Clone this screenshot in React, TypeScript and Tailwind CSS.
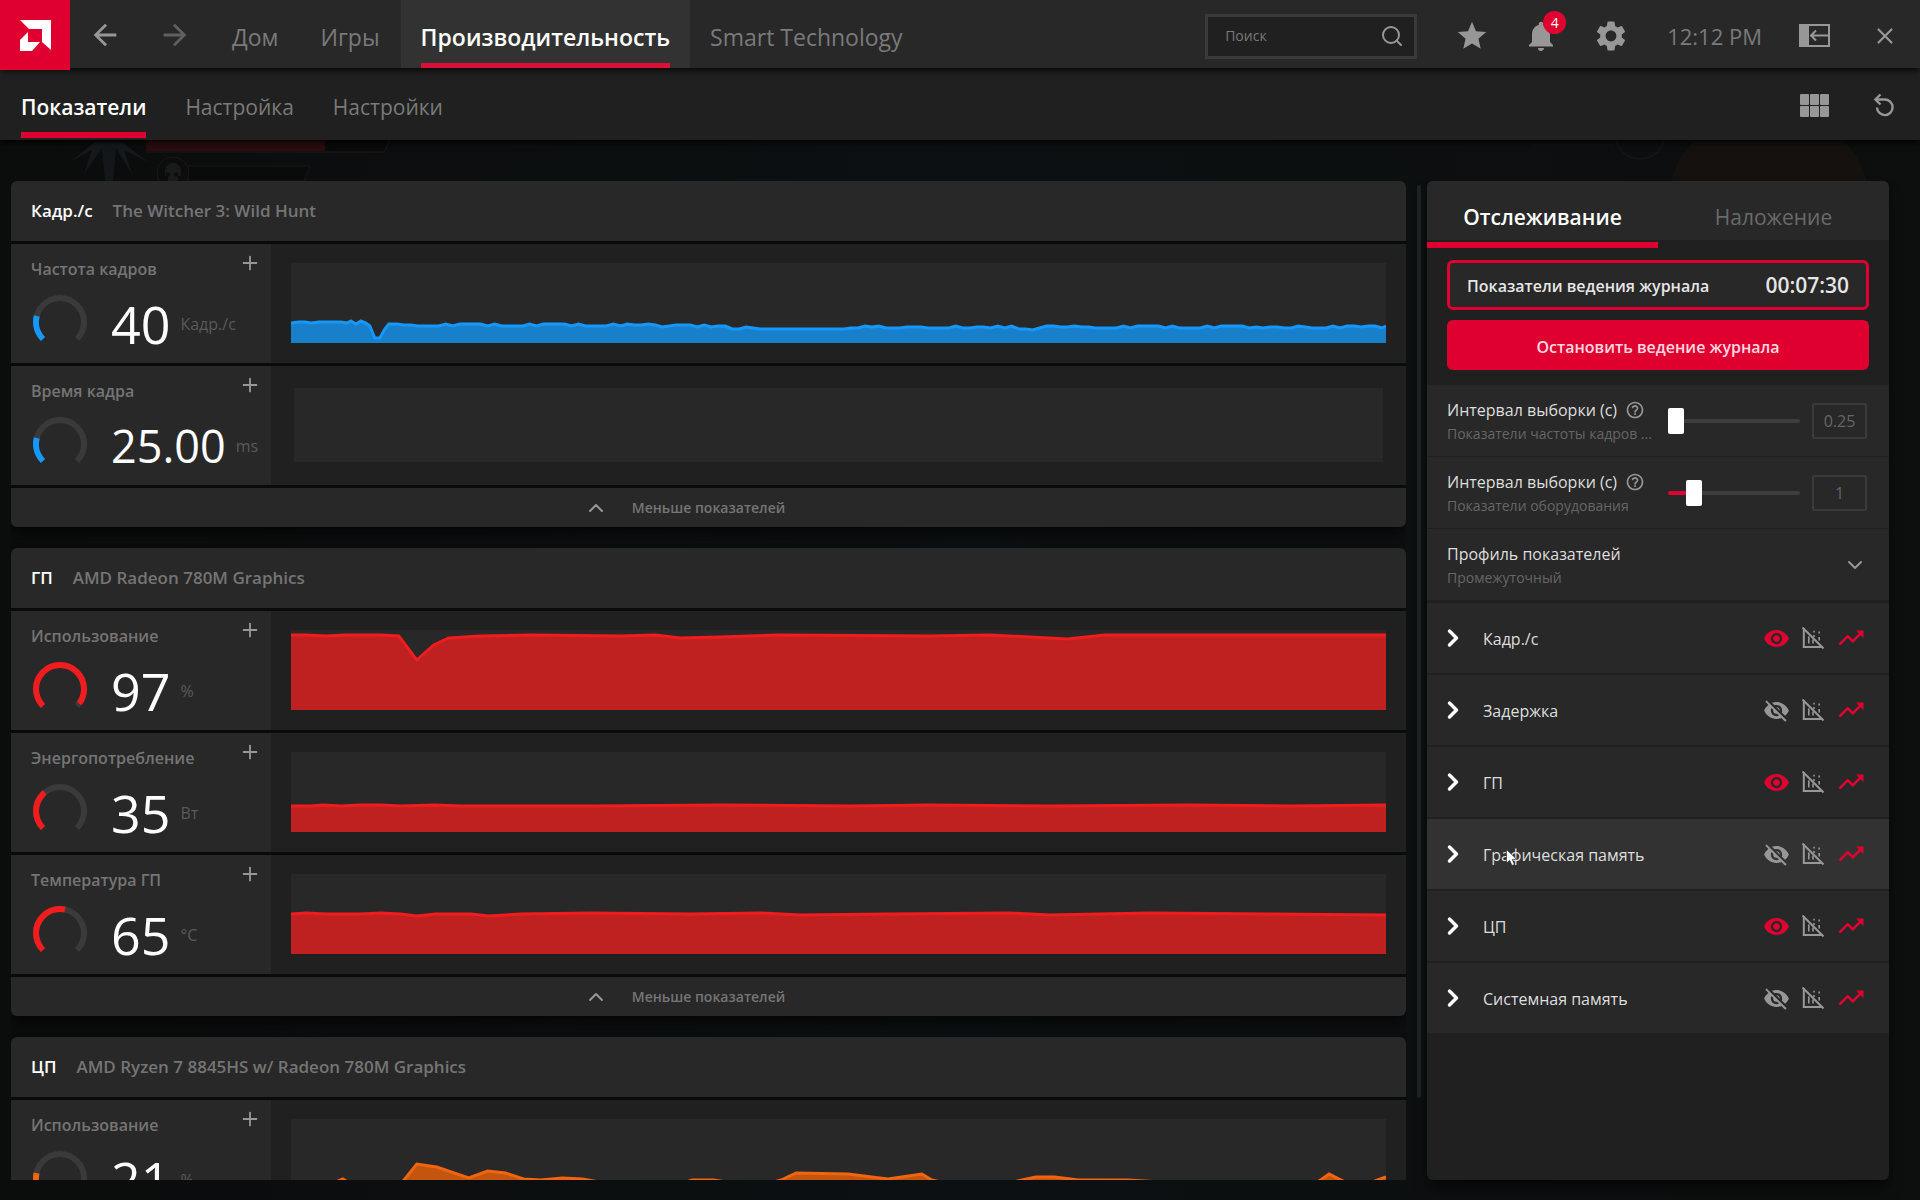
import { ChevronDown, ChevronRight, ChevronUp, Plus, Search, X } from 'lucide-react';
import { useState } from 'react';
import {
    MdArrowBack,
    MdArrowForward,
    MdHelpOutline,
    MdNotifications,
    MdSettings,
    MdStar,
    MdTrendingUp,
    MdVisibility,
    MdVisibilityOff,
} from 'react-icons/md';

type Point = [number, number];

interface Metric {
    label: string;
    value: string;
    unit: string;
    gauge: number;
    points: Point[];
}

interface MetricGroup {
    title: string;
    device: string;
    stroke: string;
    fill: string;
    metrics: Metric[];
}

const CHART_WIDTH = 1097;
const CHART_HEIGHT = 80;

// Frame rate: one dip near the start, then a small steady ripple
const buildFps = (): Point[] => {
    const points: Point[] = [
        [0, 20],
        [8, 21],
        [14, 21],
        [20, 20],
        [28, 21],
        [40, 21],
        [50, 21],
        [56, 20],
        [60, 22],
        [65, 19],
        [70, 22],
        [75, 20],
        [79, 17],
        [84, 5],
        [89, 5],
        [94, 14],
        [98, 19],
    ];
    for (let x = 106; x <= CHART_WIDTH; x += 7) {
        let base = 18;
        let ripple = 1;
        if (x > 370) base = 17;
        if (x > 440) base = 15;
        if (x > 490 && x < 560) {
            base = 14;
            ripple = 0;
        }
        if (x >= 560) base = 16;
        if (x > 725 && x < 745) base = 13;
        points.push([x, base + ripple * Math.round(Math.sin(x * x * 0.31) * 1.2)]);
    }
    points.push([CHART_WIDTH, 17]);
    return points;
};

const groups: MetricGroup[] = [
    {
        title: 'Кадр./с',
        device: 'The Witcher 3: Wild Hunt',
        stroke: '#1697fb',
        fill: '#187fcb',
        metrics: [
            { label: 'Частота кадров', value: '40', unit: 'Кадр./с', gauge: 0.22, points: buildFps() },
            { label: 'Время кадра', value: '25.00', unit: 'ms', gauge: 0.22, points: [] },
        ],
    },
    {
        title: 'ГП',
        device: 'AMD Radeon 780M Graphics',
        stroke: '#f01c1e',
        fill: '#bf2020',
        metrics: [
            {
                label: 'Использование',
                value: '97',
                unit: '%',
                gauge: 0.97,
                points: [
                    [0, 75], [15, 75], [35, 74], [55, 75], [90, 75], [108, 74], [126, 50],
                    [143, 65], [158, 72], [190, 74], [240, 75], [330, 74], [365, 75], [390, 72],
                    [430, 73], [490, 75], [640, 74], [700, 75], [740, 73], [778, 71], [815, 75],
                    [900, 75], [1097, 75],
                ],
            },
            {
                label: 'Энергопотребление',
                value: '35',
                unit: 'Вт',
                gauge: 0.355,
                points: [
                    [0, 26], [20, 26], [32, 27], [50, 26], [70, 27], [90, 27], [110, 26],
                    [144, 27], [170, 26], [300, 26], [430, 27], [560, 26], [640, 27], [760, 26],
                    [900, 27], [1000, 26], [1097, 27],
                ],
            },
            {
                label: 'Температура ГП',
                value: '65',
                unit: '°C',
                gauge: 0.545,
                points: [
                    [0, 40], [15, 41], [35, 40], [70, 40], [90, 41], [110, 40], [126, 38],
                    [145, 40], [180, 40], [198, 38], [230, 40], [300, 41], [400, 40], [470, 41],
                    [510, 39], [600, 40], [720, 41], [760, 39], [860, 41], [980, 40], [1097, 39],
                ],
            },
        ],
    },
    {
        title: 'ЦП',
        device: 'AMD Ryzen 7 8845HS w/ Radeon 780M Graphics',
        stroke: '#f16410',
        fill: '#c3550f',
        metrics: [
            {
                label: 'Использование',
                value: '21',
                unit: '%',
                gauge: 0.21,
                points: [
                    [0, 14], [40, 15], [52, 20], [60, 15], [110, 15], [126, 35], [146, 32],
                    [178, 21], [197, 28], [215, 26], [233, 20], [250, 19], [272, 21], [292, 20],
                    [320, 15], [390, 15], [402, 19], [423, 19], [450, 15], [480, 16], [491, 19],
                    [506, 26], [558, 25], [598, 20], [632, 25], [642, 19], [660, 15], [715, 15],
                    [728, 18], [746, 22], [765, 22], [789, 19], [838, 19], [872, 17], [900, 12],
                    [1015, 12], [1030, 18], [1040, 25], [1054, 18], [1066, 13], [1076, 13],
                    [1086, 18], [1097, 22],
                ],
            },
        ],
    },
];

const trackedItems = [
    { label: 'Кадр./с', visible: true },
    { label: 'Задержка', visible: false },
    { label: 'ГП', visible: true },
    { label: 'Графическая память', visible: false, hovered: true },
    { label: 'ЦП', visible: true },
    { label: 'Системная память', visible: false },
];

function Logo() {
    return (
        <svg viewBox="0 0 31 31" className="size-[31px]" fill="#fff">
            <path d="M0 0H31V30L22 22V9H9Z" />
            <path d="M8 12V22H20L12 31H0V20Z" />
        </svg>
    );
}

function DockIcon() {
    return (
        <svg viewBox="0 0 31 24" className="h-6 w-[31px]" fill="none" stroke="#979797" strokeWidth="2">
            <path d="M1 1H30V22H1Z" />
            <path d="M1 1H9V22H1Z" fill="#979797" />
            <path d="M29 11.5H13M17 6.5L12 11.5L17 16.5" />
        </svg>
    );
}

function GridIcon() {
    return (
        <svg viewBox="0 0 29 23" className="h-[23px] w-[29px]" fill="#979797">
            {[0, 10, 20].map((x) => (
                <g key={x}>
                    <rect x={x} y="0" width="9" height="11" rx="1" />
                    <rect x={x} y="12" width="9" height="11" rx="1" />
                </g>
            ))}
        </svg>
    );
}

function ResetIcon() {
    return (
        <svg viewBox="0 0 22 24" className="h-6 w-[22px]" fill="none" stroke="#979797" strokeWidth="2.4">
            <path d="M3 6.5H11.5A7.8 7.8 0 1 1 4 14.5" />
            <path d="M7.5 1.5L2.4 6.5L7.5 11.5" />
        </svg>
    );
}

function ChartOffIcon() {
    return (
        <svg viewBox="0 0 22 22" className="size-[22px]" fill="none" stroke="#979797" strokeWidth="2">
            <path d="M1.8 1.5V20H20.5" />
            <path d="M0.5 0.5L21.5 21.5" />
            <path d="M6.8 9.5V16.5M11 12.5V16.5M12 3.8V5.6M12 8V10M17.2 4.5V6.4M17.2 10V13.5" strokeWidth="1.6" />
        </svg>
    );
}

function Cursor() {
    return (
        <svg viewBox="0 0 12 18" className="absolute top-2 left-[23px] h-[18px] w-3">
            <path
                d="M0.5 0.5V14L3.7 11.3L6 16.5L8.4 15.4L6.2 10.4L10.5 10.2Z"
                fill="#fff"
                stroke="#222"
                strokeWidth="0.6"
            />
        </svg>
    );
}

function Gauge({ value, color }: { value: number; color: string }) {
    // 270 degree arc that opens towards the bottom
    const arc = 'M10 44A24 24 0 1 1 44 44';
    return (
        <svg viewBox="0 0 54 54" className="size-[54px] shrink-0" fill="none" strokeWidth="6">
            <path d={arc} stroke="#3a3a3a" />
            <path d={arc} stroke={color} pathLength="100" strokeDasharray={`${value * 100} 200`} />
        </svg>
    );
}

function Chart({ points, stroke, fill }: { points: Point[]; stroke: string; fill: string }) {
    if (!points.length) {
        return <div className="m-[3px] h-[74px] bg-[#282828]" />;
    }
    const line = points.map(([x, y]) => `${x},${CHART_HEIGHT - y}`).join(' ');
    return (
        <svg
            viewBox={`0 0 ${CHART_WIDTH} ${CHART_HEIGHT}`}
            preserveAspectRatio="none"
            className="block h-20 w-full bg-[#282828]"
        >
            <polygon points={`0,${CHART_HEIGHT} ${line} ${CHART_WIDTH},${CHART_HEIGHT}`} fill={fill} />
            <polyline points={line} fill="none" stroke={stroke} strokeWidth="3" />
        </svg>
    );
}

function MetricRow({ metric, stroke, fill }: { metric: Metric; stroke: string; fill: string }) {
    return (
        <div className="flex h-[119px] bg-[#202020]">
            <div className="w-[260px] shrink-0 bg-[#282828] pl-5">
                <div className="flex h-[46px] items-start justify-between pt-2 pr-[10px]">
                    <h3 className="pt-[3px] text-base leading-7 font-semibold text-[#757575]">
                        {metric.label}
                    </h3>
                    <button type="button" aria-label="Добавить" className="text-[#979797]">
                        <Plus className="size-[22px]" strokeWidth={2} />
                    </button>
                </div>
                <div className="flex items-center pl-[2px]">
                    <Gauge value={metric.gauge} color={stroke} />
                    <span
                        className={
                            metric.value.length > 2
                                ? 'ml-6 pt-1 text-[45px] leading-[60px] text-white'
                                : 'ml-6 pt-1 text-[52px] leading-[60px] text-white'
                        }
                    >
                        {metric.value}
                    </span>
                    <span className="ml-[10px] pt-1 text-base text-[#5a5a5a]">{metric.unit}</span>
                </div>
            </div>
            <div className="min-w-0 flex-1 px-5 py-[19px]">
                <Chart points={metric.points} stroke={stroke} fill={fill} />
            </div>
        </div>
    );
}

function MetricCard({ group }: { group: MetricGroup }) {
    return (
        <section className="flex shrink-0 flex-col gap-[3px] overflow-hidden rounded-md bg-[#090a0a] shadow-lg shadow-black/50">
            <header className="flex h-[60px] items-center gap-5 bg-[#282828] px-5 text-[17px] font-semibold">
                <h2 className="text-white">{group.title}</h2>
                <span className="text-[#757575]">{group.device}</span>
            </header>
            {group.metrics.map((metric) => (
                <MetricRow key={metric.label} metric={metric} stroke={group.stroke} fill={group.fill} />
            ))}
            <button
                type="button"
                className="grid h-[39px] grid-cols-[1fr_auto_1fr] items-center bg-[#282828] text-sm font-semibold text-[#757575]"
            >
                <ChevronUp className="mr-6 size-6 justify-self-end text-[#979797]" strokeWidth={2} />
                <span className="pt-px">Меньше показателей</span>
            </button>
        </section>
    );
}

function TopBar() {
    return (
        <header className="relative z-20 flex h-[68px] items-stretch bg-[#282828] text-[23px] text-[#7a7a7a] shadow-md shadow-black/60">
            <a href="#" aria-label="AMD" className="grid h-[70px] w-[70px] shrink-0 place-items-center bg-[#e00030]">
                <Logo />
            </a>
            <button type="button" aria-label="Назад" className="grid w-[69px] place-items-center pt-[2px] text-[#979797]">
                <MdArrowBack className="size-[34px]" />
            </button>
            <button type="button" aria-label="Вперёд" className="grid w-[72px] place-items-center pt-[2px] text-[#606060]">
                <MdArrowForward className="size-[34px]" />
            </button>
            <nav className="flex">
                <a href="#" className="flex items-center px-[21px] pt-[6px]">Дом</a>
                <a href="#" className="flex items-center px-[21px] pt-[6px]">Игры</a>
                <a href="#" className="flex bg-[#323232] px-5 font-semibold text-white">
                    <span className="flex items-center border-b-[5px] border-[#dc0f37] pt-[11px]">
                        Производительность
                    </span>
                </a>
                <a href="#" className="flex items-center px-5 pt-[6px]">Smart Technology</a>
            </nav>
            <div className="ml-auto flex items-center pt-1 text-[#979797]">
                <label className="mr-[38px] flex h-[45px] w-[212px] items-center border-[3px] border-[#3a3a3a] bg-[#202020] pr-[10px] pl-[17px]">
                    <input
                        type="text"
                        placeholder="Поиск"
                        aria-label="Поиск"
                        className="min-w-0 flex-1 bg-transparent text-sm outline-none placeholder:text-[#7a7a7a]"
                    />
                    <Search className="size-6" strokeWidth={2} />
                </label>
                <div className="flex items-center gap-[34px]">
                    <button type="button" aria-label="Избранное">
                        <MdStar className="size-[34px]" />
                    </button>
                    <button type="button" aria-label="Уведомления" className="relative">
                        <MdNotifications className="size-9" />
                        <span className="absolute -top-[7px] right-[-7px] grid size-[23px] place-items-center rounded-full bg-[#e00030] text-sm text-white">
                            4
                        </span>
                    </button>
                    <button type="button" aria-label="Параметры">
                        <MdSettings className="size-9" />
                    </button>
                    <time className="pl-1 text-[22px] text-[#7a7a7a]">12:12 PM</time>
                </div>
                <button type="button" aria-label="Закрепить" className="ml-[37px]">
                    <DockIcon />
                </button>
                <button type="button" aria-label="Закрыть" className="mr-[22px] ml-[42px]">
                    <X className="size-[26px]" strokeWidth={2} />
                </button>
            </div>
        </header>
    );
}

function SubBar() {
    return (
        <div className="relative z-10 flex h-[72px] items-stretch bg-[#202020] pb-[2px] pl-[21px] text-[21px] text-[#7a7a7a] shadow-md shadow-black/60">
            <nav className="flex gap-[39px]">
                <a href="#" className="flex items-center border-b-[6px] border-[#e00030] pt-[15px] font-semibold text-white">
                    Показатели
                </a>
                <a href="#" className="flex items-center pt-[9px]">Настройка</a>
                <a href="#" className="flex items-center pt-[9px]">Настройки</a>
            </nav>
            <div className="mr-[25px] ml-auto flex items-center gap-11 pt-1">
                <button type="button" aria-label="Сетка">
                    <GridIcon />
                </button>
                <button type="button" aria-label="Сбросить">
                    <ResetIcon />
                </button>
            </div>
        </div>
    );
}

function IntervalRow({ id, hint, initial }: { id: string; hint: string; initial: number }) {
    const [value, setValue] = useState(initial);
    const min = 0.25;
    const max = 5;
    const percent = ((value - min) / (max - min)) * 100;

    return (
        <div className="flex h-[71px] items-center bg-[#282828] pr-[22px] pl-5">
            <div className="w-[208px] shrink-0 pt-[2px]">
                <div className="flex items-center gap-2">
                    <label htmlFor={id} className="text-base leading-6 whitespace-nowrap text-[#dedede]">
                        Интервал выборки (с)
                    </label>
                    <MdHelpOutline className="size-5 shrink-0 text-[#979797]" />
                </div>
                <p className="truncate text-sm leading-6 text-[#666]">{hint}</p>
            </div>
            <input
                id={id}
                type="range"
                min={min}
                max={max}
                step={0.25}
                value={value}
                onChange={(e) => setValue(Number(e.target.value))}
                style={{
                    backgroundImage: `linear-gradient(to right, #e00030 ${percent}%, #3e3e3e ${percent}%)`,
                }}
                className="ml-[13px] h-1 min-w-0 flex-1 appearance-none rounded-full [&::-webkit-slider-thumb]:h-[26px] [&::-webkit-slider-thumb]:w-4 [&::-webkit-slider-thumb]:appearance-none [&::-webkit-slider-thumb]:rounded-xs [&::-webkit-slider-thumb]:bg-white"
            />
            <input
                type="text"
                aria-label={hint}
                value={value}
                readOnly
                className="ml-3 h-9 w-[55px] rounded-xs border-2 border-[#3a3a3a] bg-transparent text-center text-base text-[#666] outline-none"
            />
        </div>
    );
}

function TrackingPanel() {
    return (
        <aside className="flex w-[462px] shrink-0 flex-col overflow-hidden rounded-md bg-[#202020] shadow-lg shadow-black/50">
            <div className="grid h-[67px] grid-cols-2 bg-linear-to-b from-[#282828] from-[59px] to-[#202020] to-[59px] text-[21px]">
                <button type="button" className="border-b-[6px] border-[#e00030] pt-3 font-semibold text-white">
                    Отслеживание
                </button>
                <button type="button" className="pt-[6px] text-[#6a6a6a]">
                    Наложение
                </button>
            </div>
            <div className="flex flex-col gap-[10px] px-5 pt-3 pb-[15px]">
                <div className="flex h-[50px] items-center justify-between rounded-md border-[3px] border-[#e00030] bg-[#282828] px-[17px] pt-[2px] font-semibold text-[#e6e6e6]">
                    <span className="text-base">Показатели ведения журнала</span>
                    <time className="text-[21px]">00:07:30</time>
                </div>
                <button type="button" className="h-[50px] rounded-md bg-[#e00030] pt-1 text-base font-semibold text-[#ffd9e0]">
                    Остановить ведение журнала
                </button>
            </div>
            <div className="flex flex-col gap-px">
                <IntervalRow id="fps-interval" hint="Показатели частоты кадров ..." initial={0.25} />
                <IntervalRow id="hw-interval" hint="Показатели оборудования" initial={1} />
                <div className="relative flex h-[71px] flex-col justify-center bg-[#282828] px-5 pt-[2px]">
                    <label htmlFor="profile" className="text-base leading-6 text-[#dedede]">
                        Профиль показателей
                    </label>
                    <select
                        id="profile"
                        className="h-6 w-full appearance-none bg-transparent text-sm leading-6 text-[#666] outline-none"
                    >
                        <option>Промежуточный</option>
                    </select>
                    <ChevronDown
                        className="pointer-events-none absolute top-6 right-[22px] size-6 text-[#979797]"
                        strokeWidth={2}
                    />
                </div>
            </div>
            <ul className="mt-[3px] flex flex-col gap-[2px]">
                {trackedItems.map((item) => (
                    <li
                        key={item.label}
                        className={
                            item.hovered
                                ? 'flex h-[70px] items-center bg-[#323232] pr-[23px] pl-3'
                                : 'flex h-[70px] items-center bg-[#282828] pr-[23px] pl-3'
                        }
                    >
                        <button type="button" className="flex items-center text-base text-[#dedede]">
                            <ChevronRight className="mr-4 size-7 text-white" strokeWidth={3} />
                            <span className="relative pt-[2px]">
                                {item.label}
                                {item.hovered && <Cursor />}
                            </span>
                        </button>
                        <div className="ml-auto flex items-center gap-3">
                            <button type="button" aria-label="Видимость">
                                {item.visible ? (
                                    <MdVisibility className="size-[27px] text-[#e00030]" />
                                ) : (
                                    <MdVisibilityOff className="size-[27px] text-[#979797]" />
                                )}
                            </button>
                            <button type="button" aria-label="График">
                                <ChartOffIcon />
                            </button>
                            <button type="button" aria-label="Журнал">
                                <MdTrendingUp className="size-[30px] text-[#e00030]" />
                            </button>
                        </div>
                    </li>
                ))}
            </ul>
        </aside>
    );
}

// Dimmed game scene behind the overlay
function Backdrop() {
    return (
        <div className="absolute inset-0 flex justify-between bg-linear-to-r from-[#0b0c0c] via-[#0c1012] to-[#0d0e0e] pt-[140px]">
            <svg viewBox="0 0 400 41" className="h-[41px] w-[400px]">
                <path d="M146 0H325V11H146Z" fill="#2a0d0f" />
                <path d="M325 0H390L384 11H325Z" fill="#0a0a0a" />
                <path d="M146 12H384L390 0" fill="none" stroke="#201615" />
                <path d="M188 26H310L304 41H188Z" fill="#090a0a" stroke="#161616" />
                <circle cx="173" cy="33" r="16" fill="#0c0c0c" stroke="#1f1616" />
                <path d="M165 31A8 8 0 0 1 181 31V36H178V41H168V36H165Z" fill="#191b1b" />
                <path d="M170 35A2 2 0 1 1 170 34M178 35A2 2 0 1 1 178 34" fill="#0c0c0c" />
                <path d="M95 2L70 22L92 10L84 34L102 8H116L132 34L124 10L148 22L122 2Z" fill="#15191c" />
                <path d="M102 8L105 41H113L116 8Z" fill="#14171a" />
            </svg>
            <svg viewBox="0 0 480 41" className="h-[41px] w-[480px]">
                <ellipse cx="329" cy="50" rx="98" ry="75" fill="#14110f" />
                <circle cx="200" cy="-6" r="25" fill="none" stroke="#1c1918" />
                <path d="M90 5H174" stroke="#1c1515" />
            </svg>
        </div>
    );
}

export default function App() {
    return (
        <div className="relative flex h-screen flex-col overflow-hidden bg-[#0c0d0d] font-['Open_Sans','Noto_Sans',sans-serif]">
            <Backdrop />
            <TopBar />
            <SubBar />
            <main className="relative flex min-h-0 flex-1 pt-[41px] pr-[31px] pb-5 pl-[11px]">
                <div className="flex min-w-0 flex-1 flex-col gap-[21px] overflow-hidden">
                    {groups.map((group) => (
                        <MetricCard key={group.title} group={group} />
                    ))}
                </div>
                <div className="mr-[6px] ml-[11px] flex w-1 shrink-0 flex-col pt-1 pb-[82px]">
                    <div className="flex-1 rounded-full bg-[#202324]" />
                </div>
                <TrackingPanel />
            </main>
        </div>
    );
}
